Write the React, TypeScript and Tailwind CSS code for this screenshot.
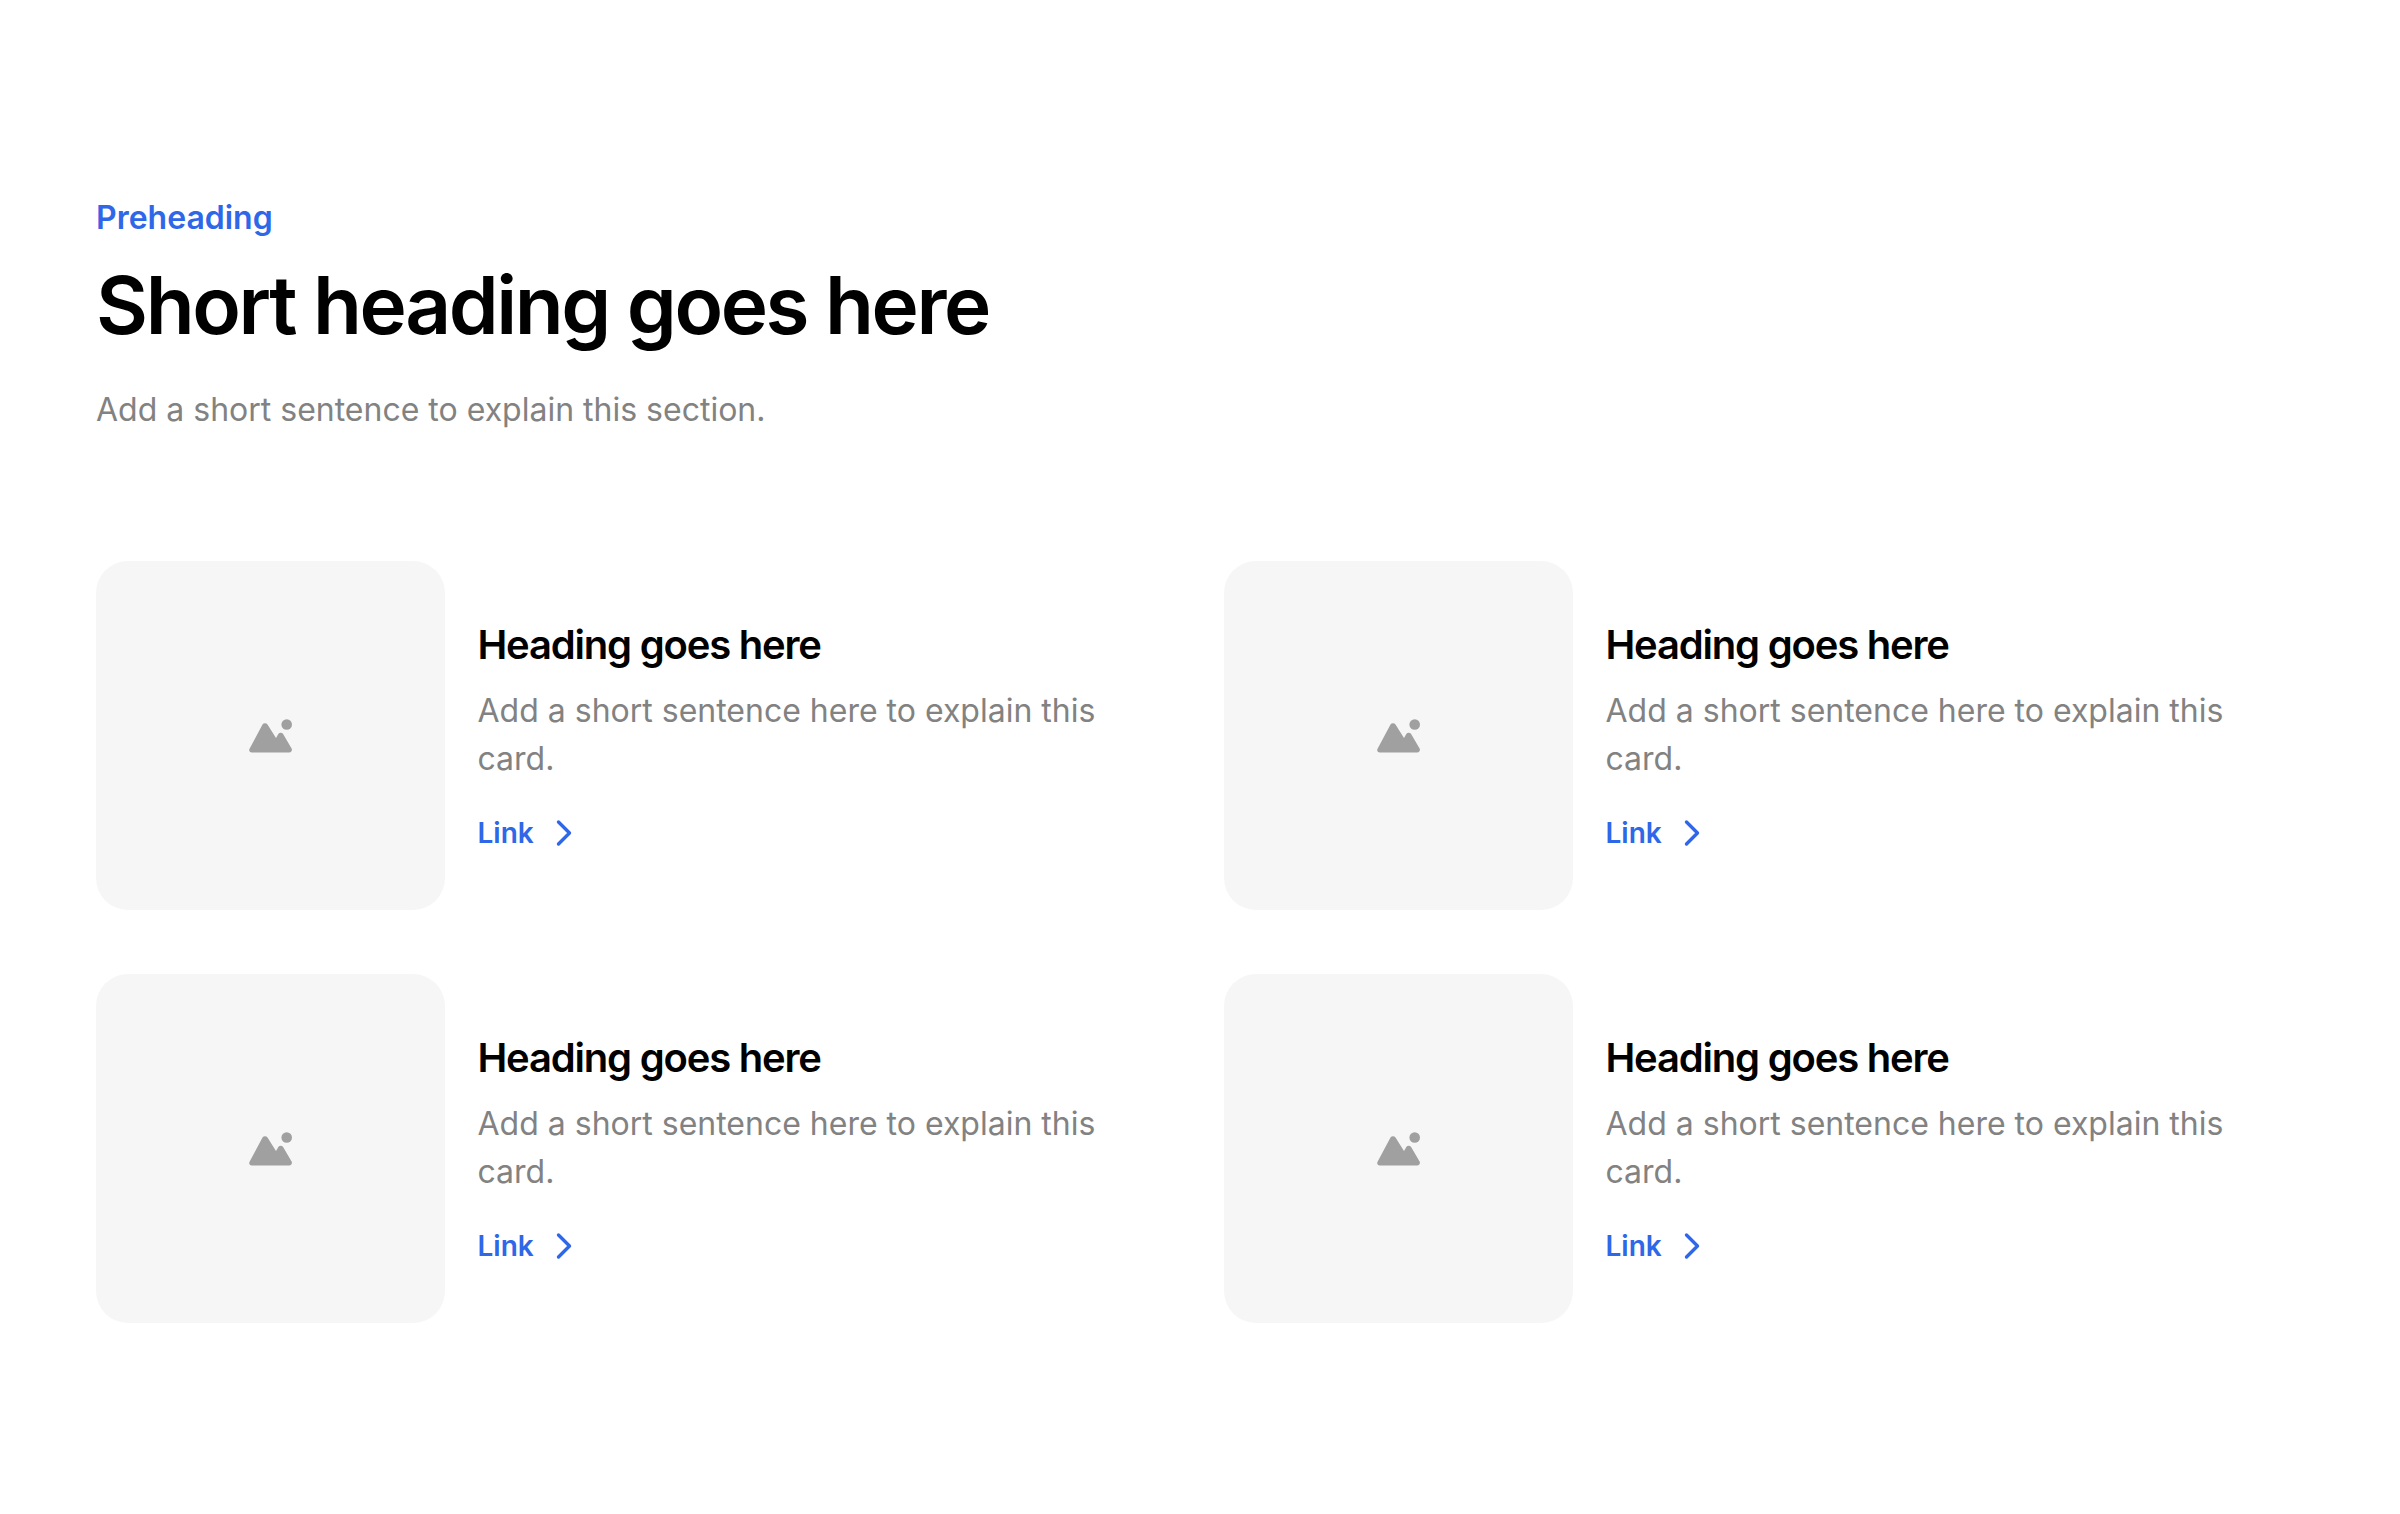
import React from 'react';

const cards = [1, 2, 3, 4];

const ImageIcon = () => (
  <svg width="44" height="34" viewBox="0 0 44 34" fill="#a0a0a0">
    <circle cx="37.7" cy="5.5" r="5.3" />
    <path d="M13.5 5.5a3 3 0 0 1 5 0L27 19l2.3-4a2.8 2.8 0 0 1 4.8 0l8.5 14.5c1 1.8-.2 4-2.3 4H2.8C.6 33.5-.5 31.2.7 29.5z" />
  </svg>
);

const Chevron = () => (
  <svg width="16" height="28" viewBox="0 0 16 28" fill="none" stroke="#2e67e8" strokeWidth="3.4" strokeLinecap="round" strokeLinejoin="round">
    <path d="M2.5 3 13.5 14 2.5 25" />
  </svg>
);

const Card = () => (
  <div className="flex items-center gap-[32.5px]">
    <div className="flex h-[349px] w-[349px] shrink-0 items-center justify-center rounded-[32px] bg-[#f6f6f6]">
      <ImageIcon />
    </div>
    <div className="flex flex-col pt-[3px]">
      <h3 className="text-[40px] leading-[52px] font-semibold tracking-[-1.2px] text-black">Heading goes here</h3>
      <p className="mt-4 text-[32px] leading-[48px] text-[#828282]">Add a short sentence here to explain this card.</p>
      <a className="mt-7 flex items-center gap-[22px] text-[28px] leading-[44px] font-semibold text-[#2e67e8]">
        Link
        <Chevron />
      </a>
    </div>
  </div>
);

export default function App() {
  return (
    <div className="h-[1514px] bg-white px-24 pt-[194px] font-['Inter',sans-serif]">
      <p className="text-[32px] leading-[48px] font-semibold text-[#2e67e8]">Preheading</p>
      <h1 className="mt-[15px] text-[80px] leading-[96px] font-semibold tracking-[-2.4px] text-black">Short heading goes here</h1>
      <p className="mt-[33px] text-[32px] leading-[48px] text-[#828282]">Add a short sentence to explain this section.</p>
      <div className="mt-[127px] grid grid-cols-2 gap-x-12 gap-y-16">
        {cards.map((id) => (
          <Card key={id} />
        ))}
      </div>
    </div>
  );
}
